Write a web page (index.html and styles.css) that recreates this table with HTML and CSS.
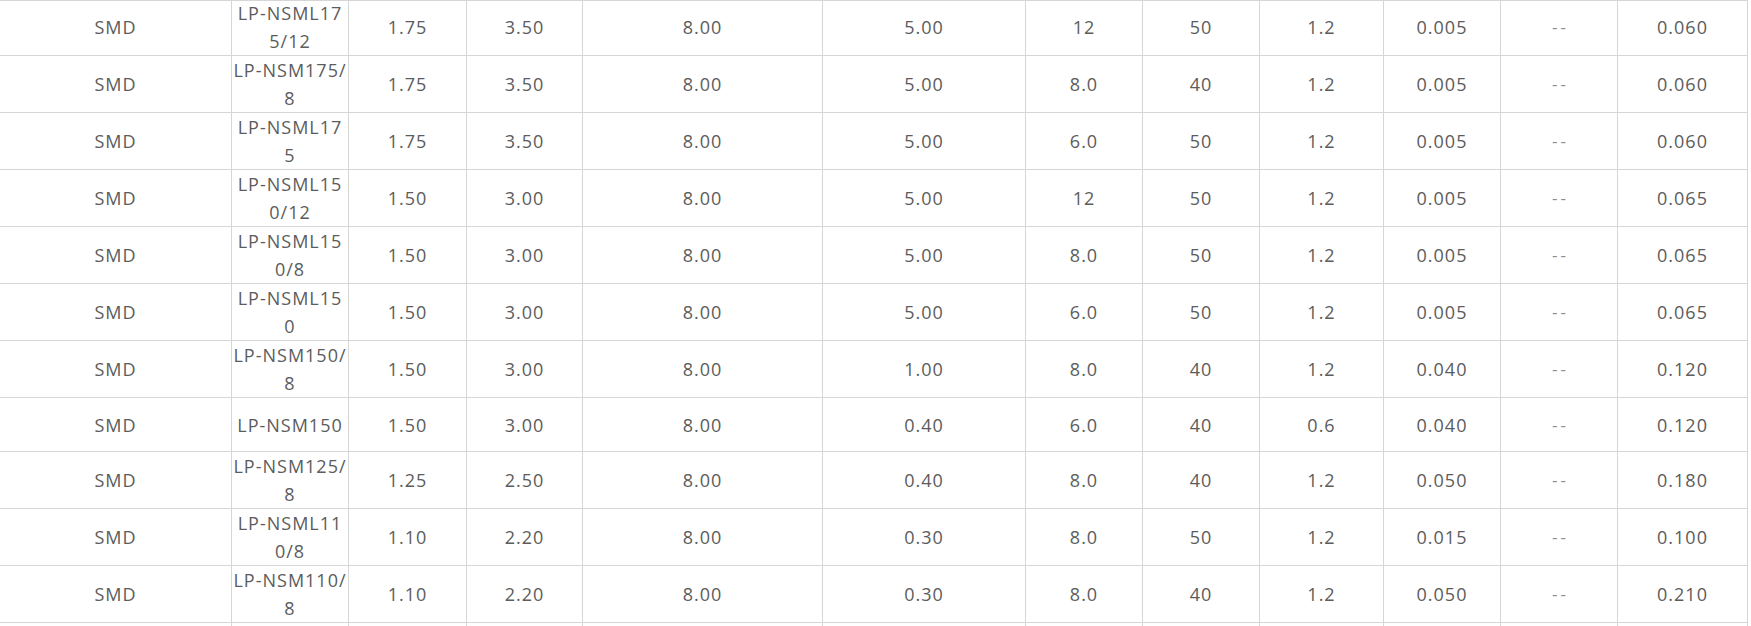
FILE: index.html
```html
<!DOCTYPE html>
<html lang="en">
<head>
<meta charset="utf-8">
<title>SMD spec table</title>
<link rel="stylesheet" href="styles.css">
</head>
<body>
<div class="table-wrap">
  <div class="spec-table">
    <div class="row"><div class="cell">SMD</div><div class="cell model">LP-NSML175/12</div><div class="cell">1.75</div><div class="cell">3.50</div><div class="cell">8.00</div><div class="cell">5.00</div><div class="cell">12</div><div class="cell">50</div><div class="cell">1.2</div><div class="cell">0.005</div><div class="cell dash">--</div><div class="cell">0.060</div></div>
    <div class="row"><div class="cell">SMD</div><div class="cell model">LP-NSM175/8</div><div class="cell">1.75</div><div class="cell">3.50</div><div class="cell">8.00</div><div class="cell">5.00</div><div class="cell">8.0</div><div class="cell">40</div><div class="cell">1.2</div><div class="cell">0.005</div><div class="cell dash">--</div><div class="cell">0.060</div></div>
    <div class="row"><div class="cell">SMD</div><div class="cell model">LP-NSML175</div><div class="cell">1.75</div><div class="cell">3.50</div><div class="cell">8.00</div><div class="cell">5.00</div><div class="cell">6.0</div><div class="cell">50</div><div class="cell">1.2</div><div class="cell">0.005</div><div class="cell dash">--</div><div class="cell">0.060</div></div>
    <div class="row"><div class="cell">SMD</div><div class="cell model">LP-NSML150/12</div><div class="cell">1.50</div><div class="cell">3.00</div><div class="cell">8.00</div><div class="cell">5.00</div><div class="cell">12</div><div class="cell">50</div><div class="cell">1.2</div><div class="cell">0.005</div><div class="cell dash">--</div><div class="cell">0.065</div></div>
    <div class="row"><div class="cell">SMD</div><div class="cell model">LP-NSML150/8</div><div class="cell">1.50</div><div class="cell">3.00</div><div class="cell">8.00</div><div class="cell">5.00</div><div class="cell">8.0</div><div class="cell">50</div><div class="cell">1.2</div><div class="cell">0.005</div><div class="cell dash">--</div><div class="cell">0.065</div></div>
    <div class="row"><div class="cell">SMD</div><div class="cell model">LP-NSML150</div><div class="cell">1.50</div><div class="cell">3.00</div><div class="cell">8.00</div><div class="cell">5.00</div><div class="cell">6.0</div><div class="cell">50</div><div class="cell">1.2</div><div class="cell">0.005</div><div class="cell dash">--</div><div class="cell">0.065</div></div>
    <div class="row"><div class="cell">SMD</div><div class="cell model">LP-NSM150/8</div><div class="cell">1.50</div><div class="cell">3.00</div><div class="cell">8.00</div><div class="cell">1.00</div><div class="cell">8.0</div><div class="cell">40</div><div class="cell">1.2</div><div class="cell">0.040</div><div class="cell dash">--</div><div class="cell">0.120</div></div>
    <div class="row"><div class="cell">SMD</div><div class="cell model">LP-NSM150</div><div class="cell">1.50</div><div class="cell">3.00</div><div class="cell">8.00</div><div class="cell">0.40</div><div class="cell">6.0</div><div class="cell">40</div><div class="cell">0.6</div><div class="cell">0.040</div><div class="cell dash">--</div><div class="cell">0.120</div></div>
    <div class="row"><div class="cell">SMD</div><div class="cell model">LP-NSM125/8</div><div class="cell">1.25</div><div class="cell">2.50</div><div class="cell">8.00</div><div class="cell">0.40</div><div class="cell">8.0</div><div class="cell">40</div><div class="cell">1.2</div><div class="cell">0.050</div><div class="cell dash">--</div><div class="cell">0.180</div></div>
    <div class="row"><div class="cell">SMD</div><div class="cell model">LP-NSML110/8</div><div class="cell">1.10</div><div class="cell">2.20</div><div class="cell">8.00</div><div class="cell">0.30</div><div class="cell">8.0</div><div class="cell">50</div><div class="cell">1.2</div><div class="cell">0.015</div><div class="cell dash">--</div><div class="cell">0.100</div></div>
    <div class="row"><div class="cell">SMD</div><div class="cell model">LP-NSM110/8</div><div class="cell">1.10</div><div class="cell">2.20</div><div class="cell">8.00</div><div class="cell">0.30</div><div class="cell">8.0</div><div class="cell">40</div><div class="cell">1.2</div><div class="cell">0.050</div><div class="cell dash">--</div><div class="cell">0.210</div></div>
    <div class="row"><div class="cell"></div><div class="cell"></div><div class="cell"></div><div class="cell"></div><div class="cell"></div><div class="cell"></div><div class="cell"></div><div class="cell"></div><div class="cell"></div><div class="cell"></div><div class="cell"></div><div class="cell"></div></div>
  </div>
</div>
</body>
</html>
```

FILE: styles.css
```css
html, body {
  margin: 0;
  padding: 0;
  background: #ffffff;
}

body {
  font-family: "Open Sans", "Noto Sans", "Liberation Sans", sans-serif;
  font-size: 18px;
  color: #5c5c5c;
  overflow: hidden;
}

.table-wrap {
  width: 1748px;
  border-top: 1px solid #d6d6d6;
  overflow: hidden;
}

.spec-table {
  margin-top: -2px;
}

.row {
  display: grid;
  grid-template-columns: 232px 117px 118px 116px 240px 203px 117px 117px 124px 117px 117px 130px;
}

.cell {
  box-sizing: border-box;
  min-height: 54px;
  display: flex;
  align-items: center;
  justify-content: center;
  text-align: center;
  padding: 0 1px;
  line-height: 28px;
  letter-spacing: 1px;
  border-right: 1px solid #d6d6d6;
  border-bottom: 1px solid #d6d6d6;
  word-break: break-all;
}

.dash {
  color: #8c8c8c;
  font-size: 17px;
  letter-spacing: 3px;
  text-indent: 3px;
}
```
